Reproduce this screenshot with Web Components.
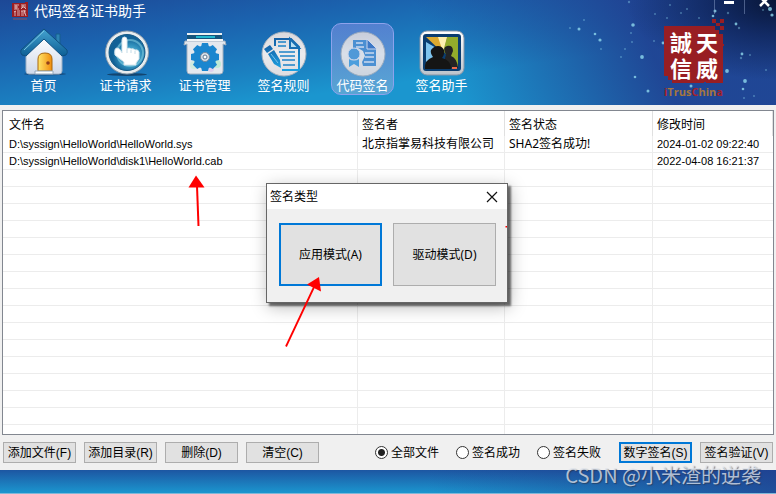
<!DOCTYPE html>
<html lang="zh-CN">
<head>
<meta charset="utf-8">
<title>代码签名证书助手</title>
<style>
  body {
    margin: 0;
    font: 12px/16px "Noto Sans", "Noto Sans CJK SC", sans-serif;
    color: #000;
    --accent: #0078d7;
    --face: #f0f0f0;
  }
</style>
</head>
<body>
<app-window>
  <title-bar slot="header">代码签名证书助手</title-bar>
  <nav-bar slot="header">
    <tool-item icon="home">首页</tool-item>
    <tool-item icon="request">证书请求</tool-item>
    <tool-item icon="manage">证书管理</tool-item>
    <tool-item icon="rules">签名规则</tool-item>
    <tool-item icon="sign" active>代码签名</tool-item>
    <tool-item icon="helper">签名助手</tool-item>
  </nav-bar>
  <file-list></file-list>
  <action-bar>
    <push-button>添加文件(F)</push-button>
    <push-button>添加目录(R)</push-button>
    <push-button>删除(D)</push-button>
    <push-button>清空(C)</push-button>
    <file-filter slot="end"></file-filter>
    <push-button slot="end" primary>数字签名(S)</push-button>
    <push-button slot="end">签名验证(V)</push-button>
  </action-bar>
  <type-dialog slot="overlay" heading="签名类型">
    <push-button large primary>应用模式(A)</push-button>
    <push-button large>驱动模式(D)</push-button>
  </type-dialog>
  <pointer-arrows slot="overlay"></pointer-arrows>
  <water-mark slot="overlay">CSDN @小米渣的逆袭</water-mark>
</app-window>

<script>
class BaseElement extends HTMLElement {
  connectedCallback() {
    if (this.shadowRoot) return;
    this.attachShadow({ mode: "open" });
    this.shadowRoot.innerHTML = this.render();
  }
}

// ---- window frame ----
const STARS = [
  [579, 29, 1.5], [595, 34, 1.3], [600, 40, 1.6], [584, 20, 1], [633, 25, 1.8], [642, 57, 1.9], [570, 28, 1],
  [601, 49, 1], [635, 77, 1.3], [648, 91, 1.5], [629, 2, 1.2], [670, 5, 1], [681, 13, 1], [655, 14, 1],
  [631, 33, 1], [632, 42, 1], [654, 41, 1], [621, 57, 1], [625, 49, 1], [687, 9, 1], [667, 18, 1],
  [727, 71, 1.9], [745, 81, 1.9], [742, 54, 1.4], [741, 58, 1.2], [750, 55, 1], [766, 70, 1], [743, 89, 1.3],
  [754, 96, 1], [744, 98, 1], [728, 13, 1.2], [715, 11, 1.5], [713, 16, 1.3], [736, 24, 1.4], [739, 28, 1.2],
  [770, 9, 2], [772, 15, 1.6], [763, 10, 1], [699, 18, 1], [663, 43, 1.4], [691, 86, 1.5]
];

class AppWindow extends BaseElement {
  render() {
    const stars = STARS.map(([x, y, r]) =>
      `<circle cx="${x - 476}" cy="${y}" r="${r}" opacity="${r > 1.2 ? 0.8 : 0.4}"/>`).join("");
    return `
      <style>
        :host { display: flex; flex-direction: column; height: 100vh; position: relative; overflow: hidden; background: var(--face); }
        header {
          height: 105px; flex: none; position: relative;
          background:
            radial-gradient(ellipse 150px 80px at 100% 0, #081638 0%, rgba(14,34,86,.75) 45%, rgba(14,34,86,0) 100%),
            linear-gradient(65deg, rgba(32,66,146,0) 56%, rgba(32,66,146,.95) 82%),
            linear-gradient(172deg, #1d4896 0%, #1b62ae 25%, #1b7fc0 49%, #1b96cf 65%);
        }
        .sky { position: absolute; right: 0; top: 0; fill: #8fd8ee; }
        trust-logo { position: absolute; right: 50px; top: 18px; }
        main { flex: 1; min-height: 0; display: flex; flex-direction: column; padding: 5px 2px 0; }
        footer {
          height: 23px; flex: none; border-bottom: 1px solid #7fb8d8;
          background:
            linear-gradient(to right, rgba(32,62,142,0) 55%, rgba(32,62,142,.8) 100%),
            linear-gradient(#1d56a2, #1b96cf);
        }
      </style>
      <header>
        <svg class="sky" width="300" height="105" aria-hidden="true">${stars}</svg>
        <slot name="header"></slot>
        <trust-logo></trust-logo>
      </header>
      <main><slot></slot></main>
      <footer></footer>
      <slot name="overlay"></slot>`;
  }
}

class TitleBar extends BaseElement {
  render() {
    return `
      <style>
        :host { display: flex; align-items: center; gap: 6px; height: 22px; padding: 0 2px 0 12px; color: #fff; position: relative; }
        h1 { margin: 0; font-size: 14px; font-weight: 400; line-height: 22px; flex: 1; }
        .mark { fill: #9a1d22; }
        .controls { display: flex; align-self: flex-start; }
        button { width: 30px; height: 14px; padding: 0; border: 0; border-left: 1px solid rgba(150,170,210,.45); background: none; display: block; }
        svg { display: block; }
      </style>
      <svg class="mark" width="16" height="18" viewBox="0 0 16 18" aria-hidden="true">
        <path d="M0 1h13v-1h3v15H0z"/>
        <path d="M2 3h5M2 5h4M2 7h5M4 3v4M9 3h5M9 5h5M11 3v2l-2 2M12 5l2 2M3 9v5M2 10l2-1M5 9h3M5 11h3M5 13h3M9 9h5M10 9v5M12 8l2 6M11 11h2M11 13h1" stroke="#ecd2d2" stroke-width=".8" fill="none"/>
        <path d="M1 17h14" stroke="#8a5560"/>
      </svg>
      <h1><slot></slot></h1>
      <div class="controls">
        <button aria-label="最小化"><svg width="30" height="14"><path d="M9 2.500h10" stroke="#fff" stroke-width="3"/></svg></button>
        <button aria-label="关闭"><svg width="30" height="14"><path d="M15-3l9 9M24-3l-9 9" stroke="#fff" stroke-width="2.500"/></svg></button>
      </div>`;
  }
}

class TrustLogo extends BaseElement {
  render() {
    return `
      <style>
        :host { display: block; }
        svg { display: block; }
        .seal { fill: #fff; font: 700 22px "Liberation Sans", "Noto Sans CJK TC", sans-serif; }
        .name { fill: #a5763f; font: 700 11px "Open Sans", sans-serif; }
        .name .r { fill: #a5222c; }
      </style>
      <svg width="62" height="80" viewBox="0 0 62 80">
        <path fill="#981e23" d="M0 8h51v4h4v4h4v10h1v2h-1v37H42v-1h-2v1H8v-3H4v-4H0zM48 1h4v4h-4zM56 1h4v4h-4zM52 5h4v3h-4zM56 8h4v4h-4z"/>
        <text class="seal" x="6" y="33">誠</text><text class="seal" x="32" y="33">天</text>
        <text class="seal" x="6" y="59">信</text><text class="seal" x="32" y="59">威</text>
        <text class="name" x="0" y="78"><tspan class="r">i</tspan>Trus<tspan class="r">C</tspan>hin<tspan class="r">a</tspan></text>
      </svg>`;
  }
}

// ---- toolbar ----
class NavBar extends BaseElement {
  render() {
    return `
      <style>
        :host { display: block; position: relative; }
        nav { display: flex; gap: 16px; padding: 1px 12px 0; }
        ::slotted(:first-child) { margin-right: 3px; }
      </style>
      <nav><slot></slot></nav>`;
  }
}

const DISC = `
  <defs><linearGradient id="disc" x2="0" y2="1"><stop stop-color="#d9d8dc"/><stop offset=".5" stop-color="#ecebed"/><stop offset="1" stop-color="#dddce0"/></linearGradient>
  <linearGradient id="ink" x2="0" y2="1"><stop stop-color="#1562a8"/><stop offset="1" stop-color="#1c9fe0"/></linearGradient></defs>
  <circle cx="24" cy="24" r="22" fill="url(#disc)" stroke="#a9b2bd"/>`;

const ICONS = {
  home: `
    <defs><linearGradient id="roof" x2="0" y2="1"><stop stop-color="#45a3d0"/><stop offset="1" stop-color="#0d5f95"/></linearGradient>
    <linearGradient id="wall" x2="0" y2="1"><stop stop-color="#fff"/><stop offset="1" stop-color="#cfd9ea"/></linearGradient>
    <linearGradient id="door"><stop stop-color="#ffe66a"/><stop offset="1" stop-color="#f08c0c"/></linearGradient></defs>
    <ellipse cx="25" cy="44" rx="21" ry="1.500" fill="#123c66" opacity=".7"/>
    <path d="M36 4h4v13h-4z" fill="#2d84b4" stroke="#175f8d"/>
    <path d="M6 20L24 6l18 14v21q0 3-3 3H9q-3 0-3-3z" fill="url(#wall)" stroke="#9db0c5"/>
    <path d="M24-1L1 20q-1 3 1 5l4 1L24 9l18 17 4-1q2-2 1-5z" fill="url(#roof)" stroke="#0e4f80"/>
    <path d="M24 1L4 20" stroke="#7cc4e2" fill="none"/>
    <path d="M18 41V29q0-6 7-6t7 6v12z" fill="url(#door)" stroke="#a9660b"/>
    <circle cx="28" cy="33" r="1.800" fill="#92401a"/>
    <path d="M15 41h18v3H15z" fill="#fff" stroke="#94a8bd"/>`,
  request: `
    <defs><radialGradient id="blue" cx=".6" cy=".6"><stop stop-color="#7bd0e4"/><stop offset=".6" stop-color="#3191bd"/><stop offset="1" stop-color="#116196"/></radialGradient></defs>
    <ellipse cx="25" cy="44.500" rx="20" ry="1.500" fill="#12385c" opacity=".8"/>
    <circle cx="25" cy="22.500" r="21.500" fill="#e7ecef" stroke="#8c9ba8"/>
    <circle cx="25" cy="22.500" r="18" fill="url(#blue)" stroke="#165b88"/>
    <circle cx="28" cy="23" r="13" fill="none" stroke="#80cce0" stroke-width="2" opacity=".6"/>
    <path d="M20 10q0-3 2.500-3t2.500 3v9q2-2 4 0 2-1 4 1 3-1 4 2v7l-3 4v2H22v-3l-9-7q-1-7 2-7 3 0 5 5z" fill="#fff" stroke="#d6e6ee"/>
    <path d="M25 19v4M29 20v3M33 21v3" stroke="#c3dbe6"/>`,
  manage: `
    <path d="M6 3h35v6H6z" fill="#15547d"/>
    <path d="M6 3h35v2H6z" fill="#edf1f4"/><path d="M15 6h19v2H15z" fill="#25b9d0"/>
    <path d="M4 11h40l1 4-3-1v27q0 3-3 3H9q-3 0-3-3V14l-3 1z" fill="#e4e8ee" stroke="#a3b0bf"/>
    <path d="M6 9h36v2H6z" fill="#f4f6f8"/>
    <circle cx="13" cy="35" r="4" fill="#cfeadf"/><circle cx="36" cy="34" r="4" fill="#bfead5"/><circle cx="30" cy="39" r="3" fill="#e0d0ec"/>
    <g transform="translate(24 27)" fill="#1b86cf">
      <circle r="11.500"/>
      <g id="teeth"><path d="M-4-10l1-4h6l1 4zM-4 10l1 4h6l1-4zM-10-4l-4 1v6l4 1zM10-4l4 1v6l-4 1z"/></g>
      <use href="#teeth" transform="rotate(45)"/>
      <circle r="4.500" fill="#d9e0e9" stroke="#77899c"/><circle r="2" fill="#fff" stroke="#5c7690"/>
    </g>`,
  rules: DISC + `
    <path d="M15 16V9h16l8 8v23H22" fill="none" stroke="url(#ink)" stroke-width="2"/>
    <path d="M30 9v9h9z" fill="#b8dff3" stroke="#176eb2" stroke-width="2"/>
    <path d="M18 12h8M18 16h8M19 22h16M20 26h15M22 30h13M23 35h12" stroke="#1c83c8" stroke-width="1.500"/>
    <path d="M4 19l6-4 3 4-6 4zM8 24l6-4 6 10 1 8-7-4z" fill="url(#ink)"/>
    <path d="M11 24l7 9" stroke="#79c3ed"/>`,
  sign: DISC + `
    <path d="M14 10h15l8 8v18H24l-1-4 3-6-2-5-5-3h-5z" fill="#4a90d3"/>
    <path d="M28 9v10h10z" fill="#3b77c5" stroke="#dde1f2"/>
    <path d="M17 13h7M17 17h8M26 23h9M26 27h9M25 32h10" stroke="#dbe4f5" stroke-width="1.500"/>
    <circle cx="15" cy="24" r="6" fill="#509bd9" stroke="#dcdff0"/>
    <path d="M10 29v8l5-3 5 3v-8q-5 3-10 0z" fill="#4aa0df"/>`,
  helper: `
    <defs><linearGradient id="frame" x2="0" y2="1"><stop stop-color="#fff"/><stop offset="1" stop-color="#bcc3cb"/></linearGradient></defs>
    <rect x="2" y="1" width="44" height="44" rx="7" fill="url(#frame)" stroke="#8695a7"/>
    <rect x="5" y="4" width="38" height="37" rx="3" fill="#0a3d70"/>
    <path d="M8 7h21l-4 16z" fill="#dca92f"/><path d="M29 7h11v30L25 21z" fill="#93ac2c"/><path d="M8 12l17 10-10 17H8z" fill="#7fc4ee"/><path d="M20 7h9l-4 15z" fill="#fff0b0"/>
    <path d="M27 28l1-3q-4-8 1-9 6-1 6 5l-2 5q6 2 7 12H27z" fill="#242424"/>
    <path d="M7 39q-1-9 8-12-3-4-2-7 3-4 7-4t6 4q1 4-2 8 9 2 9 11z" fill="#151515"/>
    <path d="M34 38h5" stroke="#ef6a4b" stroke-width="2"/>`
};

class ToolItem extends BaseElement {
  render() {
    return `
      <style>
        :host { display: block; }
        button {
          width: 63px; height: 72px; padding: 6px 0 0; border: 1px solid transparent; border-radius: 10px;
          background: none; color: #fff; font: inherit; font-size: 13px; line-height: 14px;
          display: flex; flex-direction: column; align-items: center; white-space: nowrap;
        }
        :host([active]) button { background: linear-gradient(rgba(120,140,225,.6), rgba(130,175,215,.6)); border-color: #8da2ec; }
        :host([active]) svg { opacity: .88; }
        svg { display: block; flex: none; overflow: visible; }
      </style>
      <button>
        <svg width="48" height="48" viewBox="0 0 48 48" aria-hidden="true">${ICONS[this.getAttribute("icon")]}</svg>
        <slot></slot>
      </button>`;
  }
}

// ---- file list ----
const FILES = [
  ["D:\\syssign\\HelloWorld\\HelloWorld.sys", "北京指掌易科技有限公司", "SHA2签名成功!", "2024-01-02 09:22:40"],
  ["D:\\syssign\\HelloWorld\\disk1\\HelloWorld.cab", "", "", "2022-04-08 16:21:37"]
];
const MIN_ROWS = 18;

class FileList extends BaseElement {
  render() {
    const rows = [...FILES];
    while (rows.length < MIN_ROWS) rows.push(["", "", "", ""]);
    const body = rows.map(r => `<tr>${r.map(c => `<td>${c}</td>`).join("")}</tr>`).join("");
    return `
      <style>
        :host { display: block; flex: 1; min-height: 0; overflow: hidden; background: #fff; border: 1px solid #828790; }
        table { width: 100%; table-layout: fixed; border-collapse: separate; border-spacing: 0; }
        col:nth-child(2) { width: 147px; }
        col:nth-child(3) { width: 148px; }
        col:nth-child(4) { width: 120px; }
        th, td { box-sizing: border-box; padding: 0 0 0 4px; text-align: left; font-weight: 400; white-space: nowrap; border-right: 1px solid #ececec; }
        th { height: 25px; padding-top: 2px; border-color: #e0e0e0; }
        td { height: 17px; line-height: 16px; border-bottom: 1px solid #ececec; }
        th:first-child, td:first-child { padding-left: 6px; }
        td:last-child { border-right: 0; }
        td:first-child, td:last-child { font-family: "Liberation Sans", sans-serif; font-size: 11px; }
      </style>
      <table>
        <colgroup><col><col><col><col></colgroup>
        <thead><tr><th>文件名</th><th>签名者</th><th>签名状态</th><th>修改时间</th></tr></thead>
        <tbody>${body}</tbody>
      </table>`;
  }
}

// ---- bottom bar ----
class ActionBar extends BaseElement {
  render() {
    return `
      <style>
        :host { display: flex; justify-content: space-between; padding: 7px 1px; font-family: "Liberation Sans", "Noto Sans CJK SC", sans-serif; }
        div { display: flex; gap: 8px; align-items: center; }
      </style>
      <div><slot></slot></div>
      <div><slot name="end"></slot></div>`;
  }
}

class PushButton extends BaseElement {
  render() {
    return `
      <style>
        :host { display: block; }
        button {
          box-sizing: border-box; width: 73px; height: 21px; padding: 0; display: block;
          background: #e1e1e1; border: 1px solid #adadad; color: #000; font: inherit; line-height: 16px; white-space: nowrap;
        }
        :host([primary]) button { border: 2px solid var(--accent); }
        :host([large]) button { width: 103px; height: 63px; }
      </style>
      <button><slot></slot></button>`;
  }
}

class FileFilter extends BaseElement {
  render() {
    const options = ["全部文件", "签名成功", "签名失败"];
    return `
      <style>
        :host { display: flex; margin-right: 10px; }
        label { width: 78px; display: flex; align-items: center; gap: 3px; white-space: nowrap; }
        label + label { margin-left: 3px; }
        label:last-child { width: auto; }
        input { appearance: none; box-sizing: border-box; width: 13px; height: 13px; margin: 0; border: 1px solid #333; border-radius: 50%; background: #fff; }
        input:checked { background: radial-gradient(circle, #222 3px, #fff 4px); }
      </style>
      ${options.map((o, i) => `<label><input type="radio" name="filter" ${i ? "" : "checked"}>${o}</label>`).join("")}`;
  }
}

// ---- overlays ----
class TypeDialog extends BaseElement {
  render() {
    return `
      <style>
        :host {
          display: block; position: absolute; left: calc(50% - 122px); top: 183px; box-sizing: border-box;
          border: 1px solid #666; background: var(--face);
          box-shadow: 3px 3px 2px rgba(0,0,0,.55), 2px 4px 16px rgba(0,0,0,.28);
        }
        .title { display: flex; justify-content: space-between; align-items: center; height: 25px; padding: 0 9px 0 3px; background: #fff; }
        h2 { margin: 0; font-size: 12px; font-weight: 400; line-height: 16px; }
        button { width: 12px; height: 12px; padding: 0; border: 0; background: none; display: block; }
        svg { display: block; }
        .body { display: flex; gap: 11px; padding: 14px 11px 16px 12px; }
      </style>
      <div class="title">
        <h2>${this.getAttribute("heading")}</h2>
        <button aria-label="关闭"><svg width="12" height="12"><path d="M1 1l10 10M11 1L1 11" stroke="#111" stroke-width="1.200"/></svg></button>
      </div>
      <div class="body"><slot></slot></div>`;
  }
}

class PointerArrows extends BaseElement {
  render() {
    return `
      <style>
        :host { display: block; position: absolute; left: 0; top: 0; pointer-events: none; }
        svg { display: block; }
      </style>
      <svg width="520" height="360" fill="#f00" stroke="none" aria-hidden="true">
        <path d="M196 175.500l8.500 12h-16z"/><path d="M197 186l1.500 40" stroke="#f00" stroke-width="2"/>
        <path d="M319 277l2 14.500-14-7z"/><path d="M314.500 286L286 346.500" stroke="#f00" stroke-width="1.800"/>
        <path d="M505.500 226h1.500v1.500h-1.500z"/>
      </svg>`;
  }
}

class WaterMark extends BaseElement {
  render() {
    return `
      <style>
        :host {
          display: block; position: absolute; right: 15px; bottom: 6px; pointer-events: none;
          font: 20px/26px "Noto Sans CJK SC", sans-serif; color: rgba(225,230,238,.75); text-shadow: 1px 1px 1px rgba(40,50,70,.6);
        }
      </style>
      <slot></slot>`;
  }
}

customElements.define("app-window", AppWindow);
customElements.define("title-bar", TitleBar);
customElements.define("trust-logo", TrustLogo);
customElements.define("nav-bar", NavBar);
customElements.define("tool-item", ToolItem);
customElements.define("file-list", FileList);
customElements.define("action-bar", ActionBar);
customElements.define("push-button", PushButton);
customElements.define("file-filter", FileFilter);
customElements.define("type-dialog", TypeDialog);
customElements.define("pointer-arrows", PointerArrows);
customElements.define("water-mark", WaterMark);
</script>
</body>
</html>
